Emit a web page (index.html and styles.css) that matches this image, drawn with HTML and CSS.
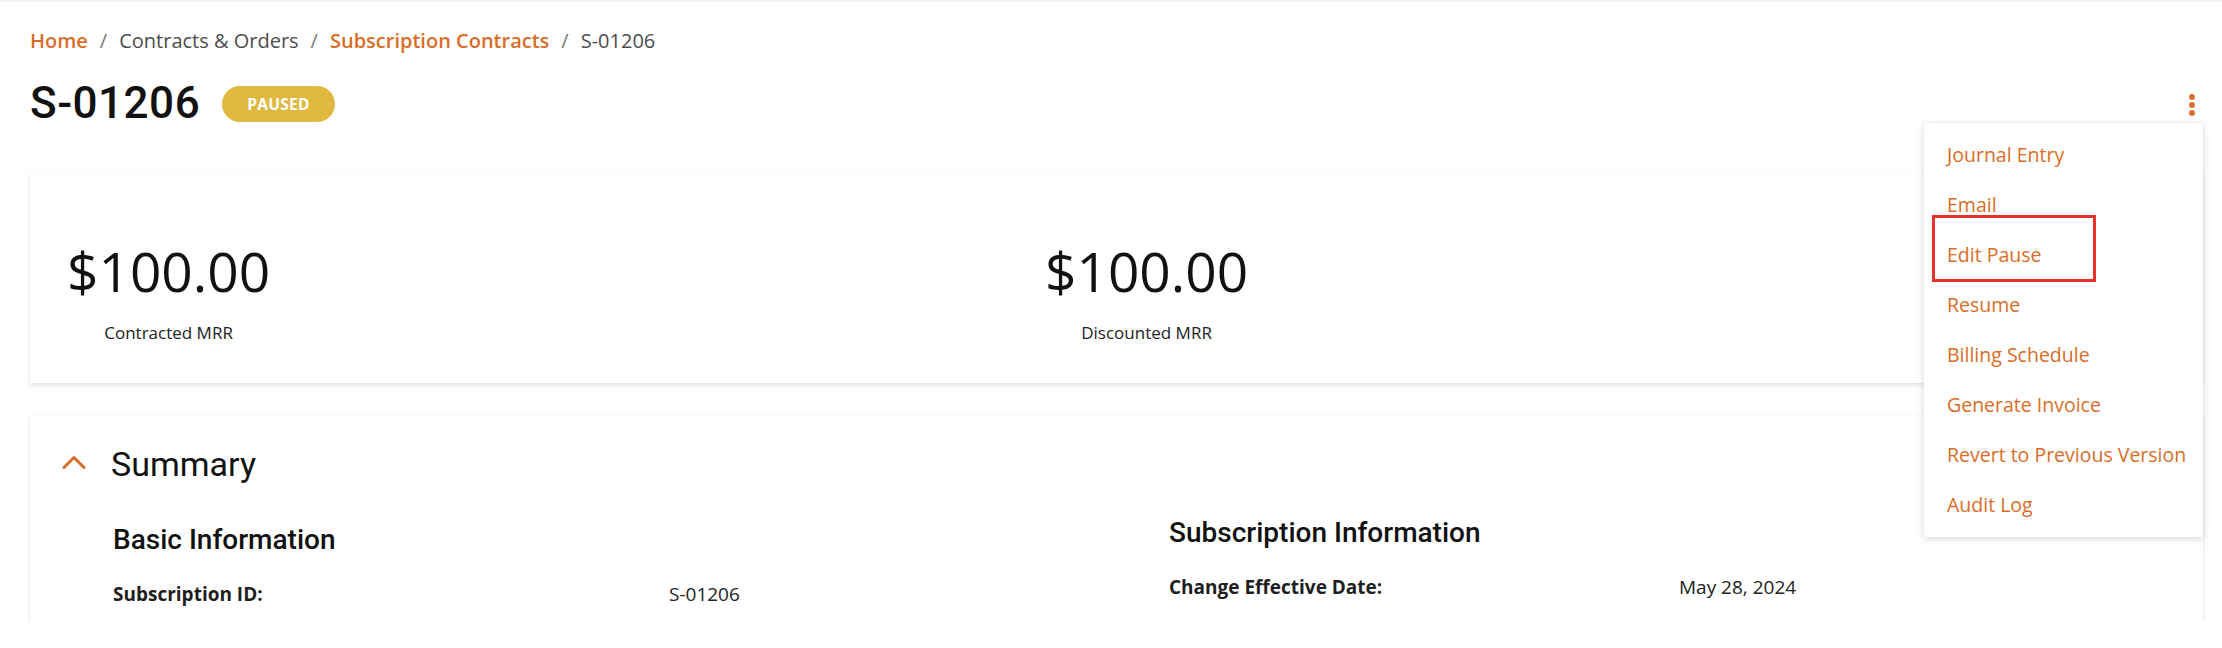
FILE: index.html
```html
<!DOCTYPE html>
<html lang="en">
<head>
<meta charset="utf-8">
<title>S-01206 – Subscription Contract</title>
<link rel="stylesheet" href="styles.css">
</head>
<body>
<div class="page">
  <nav class="breadcrumb">
    <a class="crumb-link" href="#">Home</a>
    <span class="sep">/</span>
    <span class="crumb">Contracts &amp; Orders</span>
    <span class="sep">/</span>
    <a class="crumb-link" href="#">Subscription Contracts</a>
    <span class="sep">/</span>
    <span class="crumb">S-01206</span>
  </nav>

  <header class="title-row">
    <div class="title-group">
      <h1 class="title">S-01206</h1>
      <span class="badge">PAUSED</span>
    </div>
    <div class="actions">
      <button class="kebab" aria-label="More actions">
        <svg width="22" height="34" viewBox="0 0 22 34" aria-hidden="true">
          <circle cx="11" cy="10" r="2.9"/>
          <circle cx="11" cy="18" r="2.9"/>
          <circle cx="11" cy="26" r="2.9"/>
        </svg>
      </button>
      <ul class="menu">
        <li class="menu-item">Journal Entry</li>
        <li class="menu-item">Email</li>
        <li class="menu-item">Edit Pause<span class="annot"></span></li>
        <li class="menu-item">Resume</li>
        <li class="menu-item">Billing Schedule</li>
        <li class="menu-item">Generate Invoice</li>
        <li class="menu-item">Revert to Previous Version</li>
        <li class="menu-item">Audit Log</li>
      </ul>
    </div>
  </header>

  <section class="card metrics">
    <div class="metric">
      <div class="amount">$100.00</div>
      <div class="metric-label">Contracted MRR</div>
    </div>
    <div class="metric">
      <div class="amount">$100.00</div>
      <div class="metric-label">Discounted MRR</div>
    </div>
  </section>

  <section class="card summary">
    <div class="summary-head">
      <svg class="chevron" width="24" height="14" viewBox="0 0 24 14" aria-hidden="true">
        <polyline points="2,12.5 12,2.5 22,12.5"/>
      </svg>
      <h2 class="summary-title">Summary</h2>
    </div>
    <div class="summary-grid">
      <div class="info-col">
        <h3 class="info-title">Basic Information</h3>
        <dl class="info-list basic">
          <dt>Subscription ID:</dt>
          <dd>S-01206</dd>
        </dl>
      </div>
      <div class="info-col right">
        <h3 class="info-title">Subscription Information</h3>
        <dl class="info-list sub">
          <dt>Change Effective Date:</dt>
          <dd>May 28, 2024</dd>
        </dl>
      </div>
    </div>
  </section>
</div>
</body>
</html>
```

FILE: styles.css
```css
* { box-sizing: border-box; }

html, body {
  margin: 0;
  padding: 0;
  background: #ffffff;
}

body {
  font-family: "Open Sans", "Noto Sans", sans-serif;
  color: #222;
}

.page {
  height: 622px;
  overflow: hidden;
  padding: 0 19px 0 30px;
  border-top: 2px solid #f1f1f1;
}

/* Breadcrumb */
.breadcrumb {
  margin-top: 25px;
  font-size: 20px;
  line-height: 27px;
  display: flex;
  align-items: center;
  white-space: nowrap;
}

.crumb-link {
  color: #d96d28;
  font-weight: 600;
  text-decoration: none;
}

.crumb {
  color: #4d4d4d;
}

.sep {
  color: #777;
  margin: 0 12px;
}

/* Title row */
.title-row {
  margin-top: 23px;
  height: 52px;
  display: flex;
  justify-content: space-between;
  align-items: center;
}

.title-group {
  display: flex;
  align-items: center;
}

.title {
  margin: 0;
  font-family: Roboto, "Liberation Sans", sans-serif;
  font-weight: 500;
  font-size: 44px;
  line-height: 52px;
  letter-spacing: 0.5px;
  color: #111;
}

.badge {
  margin-left: 22px;
  margin-top: 2px;
  height: 36px;
  padding: 0 25px;
  border-radius: 18px;
  background: #dfb83f;
  color: #fff;
  font-size: 15.5px;
  font-weight: 700;
  line-height: 36px;
  letter-spacing: 0.3px;
}

.actions {
  position: relative;
  align-self: stretch;
  display: flex;
  align-items: center;
}

.kebab {
  width: 22px;
  height: 34px;
  padding: 0;
  border: 0;
  background: transparent;
  display: block;
  margin-top: 2px;
}

.kebab svg {
  display: block;
  fill: #d96d28;
}

.menu {
  position: absolute;
  right: 0;
  top: 46px;
  width: 279px;
  height: 414px;
  margin: 0;
  padding: 7px 0 7px;
  list-style: none;
  background: #fff;
  box-shadow: 0 2px 8px rgba(0, 0, 0, 0.14), 0 0 2px rgba(0, 0, 0, 0.06);
  z-index: 10;
}

.menu-item {
  position: relative;
  height: 50px;
  line-height: 50px;
  padding-left: 23px;
  font-size: 19.5px;
  color: #d96d28;
  white-space: nowrap;
}

.annot {
  position: absolute;
  left: 8px;
  top: -15px;
  width: 164px;
  height: 67px;
  border: 3px solid #e6332a;
}

/* Cards */
.card {
  background: #fff;
  box-shadow: 0 3px 5px rgba(0, 0, 0, 0.09), 0 0 3px rgba(0, 0, 0, 0.05);
}

.metrics {
  margin-top: 42px;
  height: 212px;
  padding: 62px 0 0 37px;
  display: grid;
  grid-template-columns: 978px 978px;
  align-items: start;
}

.metric {
  justify-self: start;
  display: flex;
  flex-direction: column;
  align-items: center;
}

.amount {
  font-size: 55px;
  line-height: 76px;
  color: #111;
}

.metric-label {
  margin-top: 12px;
  font-size: 17px;
  line-height: 24px;
  color: #222;
}

/* Summary card */
.summary {
  margin-top: 32px;
  padding: 29px 0 40px 32px;
}

.summary-head {
  display: flex;
  align-items: center;
  height: 40px;
}

.chevron {
  display: block;
  margin-top: -4px;
}

.chevron polyline {
  fill: none;
  stroke: #d96d28;
  stroke-width: 3;
  stroke-linecap: round;
  stroke-linejoin: round;
}

.summary-title {
  margin: 0 0 0 25px;
  font-family: Roboto, "Liberation Sans", sans-serif;
  font-weight: 400;
  font-size: 34px;
  line-height: 40px;
  color: #111;
}

.summary-grid {
  margin-top: 38px;
  padding-left: 51px;
  display: grid;
  grid-template-columns: 1056px 1fr;
}

.info-col.right {
  margin-top: -7px;
}

.info-title {
  margin: 0;
  font-family: Roboto, "Liberation Sans", sans-serif;
  font-weight: 500;
  font-size: 28px;
  line-height: 35px;
  color: #111;
}

.info-list {
  margin: 23px 0 0;
  display: grid;
  font-size: 19px;
  line-height: 28px;
}

.info-list.basic { grid-template-columns: 556px 1fr; }
.info-list.sub { grid-template-columns: 510px 1fr; }

.info-list dt {
  font-weight: 700;
  color: #1e1e1e;
}

.info-list dd {
  margin: 0;
  color: #222;
}
```
